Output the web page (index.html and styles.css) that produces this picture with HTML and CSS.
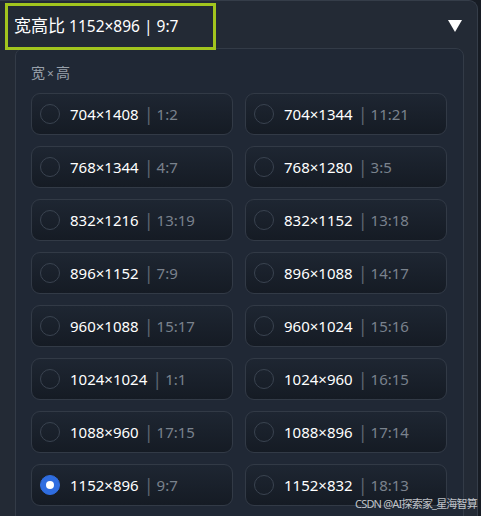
FILE: index.html
```html
<!DOCTYPE html>
<html lang="zh">
<head>
<meta charset="utf-8">
<link rel="stylesheet" href="styles.css">
</head>
<body>
<div class="panel">
  <div class="header">
    <div class="title"><span class="cjk">宽高比</span> 1152×896 | 9:7</div>
    <svg class="arrow" width="14" height="12" viewBox="0 0 14 12"><polygon points="0,0 14,0 7,12" fill="#ffffff"/></svg>
    <div class="highlight"></div>
  </div>
  <div class="group">
    <div class="label">宽<span class="x">×</span>高</div>
    <div class="grid">
      <div class="opt"><span class="radio"></span><span class="size">704×1408</span><span class="sep">|</span><span class="ratio">1:2</span></div>
      <div class="opt"><span class="radio"></span><span class="size">704×1344</span><span class="sep">|</span><span class="ratio">11:21</span></div>
      <div class="opt"><span class="radio"></span><span class="size">768×1344</span><span class="sep">|</span><span class="ratio">4:7</span></div>
      <div class="opt"><span class="radio"></span><span class="size">768×1280</span><span class="sep">|</span><span class="ratio">3:5</span></div>
      <div class="opt"><span class="radio"></span><span class="size">832×1216</span><span class="sep">|</span><span class="ratio">13:19</span></div>
      <div class="opt"><span class="radio"></span><span class="size">832×1152</span><span class="sep">|</span><span class="ratio">13:18</span></div>
      <div class="opt"><span class="radio"></span><span class="size">896×1152</span><span class="sep">|</span><span class="ratio">7:9</span></div>
      <div class="opt"><span class="radio"></span><span class="size">896×1088</span><span class="sep">|</span><span class="ratio">14:17</span></div>
      <div class="opt"><span class="radio"></span><span class="size">960×1088</span><span class="sep">|</span><span class="ratio">15:17</span></div>
      <div class="opt"><span class="radio"></span><span class="size">960×1024</span><span class="sep">|</span><span class="ratio">15:16</span></div>
      <div class="opt"><span class="radio"></span><span class="size">1024×1024</span><span class="sep">|</span><span class="ratio">1:1</span></div>
      <div class="opt"><span class="radio"></span><span class="size">1024×960</span><span class="sep">|</span><span class="ratio">16:15</span></div>
      <div class="opt"><span class="radio"></span><span class="size">1088×960</span><span class="sep">|</span><span class="ratio">17:15</span></div>
      <div class="opt"><span class="radio"></span><span class="size">1088×896</span><span class="sep">|</span><span class="ratio">17:14</span></div>
      <div class="opt"><span class="radio checked"></span><span class="size">1152×896</span><span class="sep">|</span><span class="ratio">9:7</span></div>
      <div class="opt"><span class="radio"></span><span class="size">1152×832</span><span class="sep">|</span><span class="ratio">18:13</span></div>
    </div>
  </div>
</div>
<div class="watermark">CSDN @AI探索家_星海智算</div>
</body>
</html>
```

FILE: styles.css
```css
html, body {
  margin: 0;
  padding: 0;
}
body {
  width: 481px;
  height: 516px;
  overflow: hidden;
  background: #171c24;
  font-family: "Noto Sans", "Noto Sans CJK SC", sans-serif;
  position: relative;
}
.panel {
  width: 478px;
  height: 516px;
  overflow: hidden;
  box-sizing: border-box;
  background: #232a35;
  border-top: 1px solid #353d49;
  border-right: 1px solid #353d49;
  border-top-right-radius: 9px;
}
.header {
  position: relative;
  height: 47px;
  display: flex;
  align-items: center;
  justify-content: space-between;
  padding: 0 15px 0 14px;
}
.title {
  color: #ffffff;
  font-size: 15.5px;
  margin-top: 0;
}
.title .cjk {
  font-size: 17px;
}
.arrow {
  display: block;
  margin-top: 3px;
}
.highlight {
  position: absolute;
  left: 5px;
  top: 2px;
  width: 211px;
  height: 47px;
  box-sizing: border-box;
  border: 3px solid #a2c51e;
}
.group {
  margin-left: 15px;
  width: 449px;
  box-sizing: border-box;
  border: 1px solid #333b47;
  border-radius: 8px;
  background: #202835;
  padding: 13px 15px 0 15px;
  height: 500px;
}
.label {
  color: #98a0aa;
  font-size: 14px;
  line-height: 20px;
  height: 20px;
  margin-bottom: 11px;
  font-family: "Noto Sans CJK SC", sans-serif;
}
.label .x {
  font-family: "Noto Sans", sans-serif;
  font-size: 12px;
  margin: 0 2px;
}
.grid {
  display: grid;
  grid-template-columns: 202px 202px;
  column-gap: 12px;
  row-gap: 11px;
}
.opt {
  height: 42px;
  box-sizing: border-box;
  border: 1px solid #323a46;
  border-radius: 9px;
  background: linear-gradient(180deg, #1e2632 0%, #151b24 100%);
  display: flex;
  align-items: center;
  padding-left: 8px;
}
.radio {
  width: 20px;
  height: 20px;
  box-sizing: border-box;
  border: 1px solid #3a4350;
  border-radius: 50%;
  margin-right: 10px;
  flex: none;
}
.radio.checked {
  background: #2f6de0;
  border-color: #2f6de0;
  position: relative;
}
.radio.checked::after {
  content: "";
  position: absolute;
  left: 5px;
  top: 5px;
  width: 8px;
  height: 8px;
  border-radius: 50%;
  background: #ffffff;
}
.size {
  color: #ffffff;
  font-size: 15px;
}
.sep {
  color: #5c6470;
  font-size: 18px;
  line-height: 18px;
  margin: 0 3px 0 5px;
}
.ratio {
  color: #7a828d;
  font-size: 15px;
}
.watermark {
  position: absolute;
  left: 355px;
  top: 497px;
  color: rgba(235, 238, 242, 0.8);
  font-size: 11px;
  letter-spacing: -0.8px;
  font-family: "Noto Sans", "Noto Sans CJK SC", sans-serif;
  line-height: 14px;
  white-space: nowrap;
}
```
